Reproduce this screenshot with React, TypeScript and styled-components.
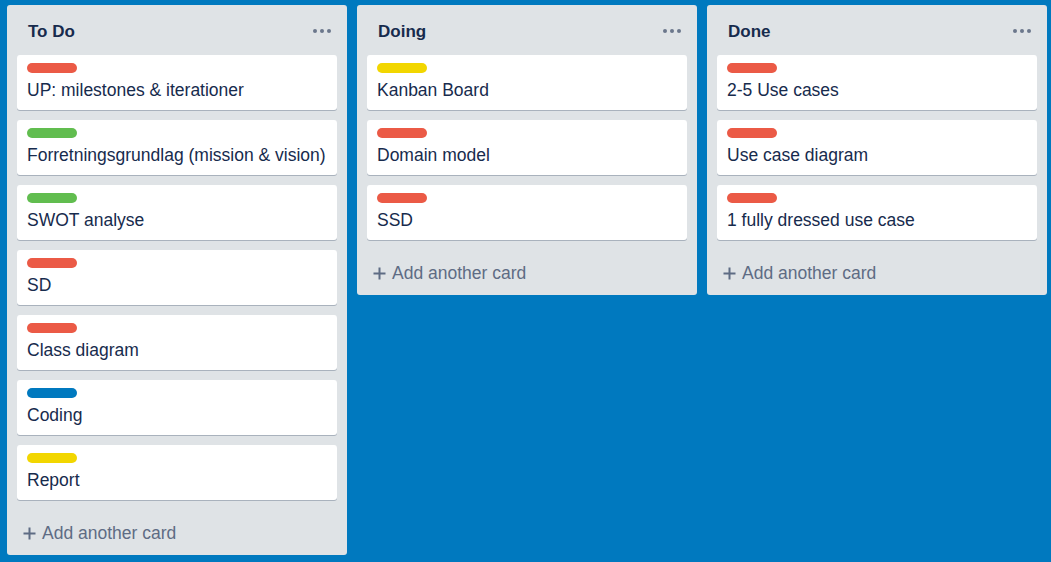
import React from "react";
import styled, { createGlobalStyle } from "styled-components";

const GlobalStyle = createGlobalStyle`
  html, body { margin: 0; padding: 0; }
  body {
    background: #0079bf;
    font-family: "Liberation Sans", Arial, sans-serif;
    width: 1051px;
    height: 562px;
    overflow: hidden;
  }
`;

const Board = styled.div`
  display: flex;
  align-items: flex-start;
  gap: 10px;
  padding: 5px 7px;
`;

const List = styled.section`
  flex: 0 0 340px;
  width: 340px;
  background: #dfe3e6;
  border-radius: 3px;
  display: flex;
  flex-direction: column;
`;

const ListHeader = styled.header`
  display: flex;
  align-items: center;
  justify-content: space-between;
  height: 50px;
  padding: 0 16px 0 21px;
  box-sizing: border-box;
`;

const Title = styled.h2`
  margin: 0;
  font-size: 17px;
  font-weight: 700;
  color: #172b4d;
  padding-top: 3px;
`;

const Dots = styled.div`
  display: flex;
  gap: 3px;
  padding-top: 1px;
  span {
    width: 4px;
    height: 4px;
    border-radius: 50%;
    background: #6b778c;
  }
`;

const Cards = styled.div`
  display: flex;
  flex-direction: column;
  gap: 10px;
  padding: 0 10px;
`;

const Card = styled.div`
  background: #fff;
  border-radius: 3px;
  box-shadow: 0 1px 0 rgba(9, 30, 66, 0.25);
  height: 55px;
  padding: 8px 10px 0;
  box-sizing: border-box;
`;

const Label = styled.div<{ $color: string }>`
  width: 50px;
  height: 10px;
  border-radius: 5px;
  background: ${(p) => p.$color};
`;

const CardText = styled.div`
  margin-top: 7px;
  font-size: 17.5px;
  line-height: 20px;
  color: #172b4d;
  white-space: nowrap;
`;

const AddCard = styled.div`
  display: flex;
  align-items: center;
  gap: 6px;
  height: 55px;
  padding: 11px 16px 0;
  color: #5e6c84;
  font-size: 17.5px;
  box-sizing: border-box;
`;

const colors: Record<string, string> = {
  red: "#eb5a46",
  green: "#61bd4f",
  yellow: "#f2d600",
  blue: "#0079bf",
};

type CardData = { label: keyof typeof colors; text: string };

const lists: { title: string; cards: CardData[] }[] = [
  {
    title: "To Do",
    cards: [
      { label: "red", text: "UP: milestones & iterationer" },
      { label: "green", text: "Forretningsgrundlag (mission & vision)" },
      { label: "green", text: "SWOT analyse" },
      { label: "red", text: "SD" },
      { label: "red", text: "Class diagram" },
      { label: "blue", text: "Coding" },
      { label: "yellow", text: "Report" },
    ],
  },
  {
    title: "Doing",
    cards: [
      { label: "yellow", text: "Kanban Board" },
      { label: "red", text: "Domain model" },
      { label: "red", text: "SSD" },
    ],
  },
  {
    title: "Done",
    cards: [
      { label: "red", text: "2-5 Use cases" },
      { label: "red", text: "Use case diagram" },
      { label: "red", text: "1 fully dressed use case" },
    ],
  },
];

const PlusIcon = () => (
  <svg width="13" height="13" viewBox="0 0 13 13">
    <path d="M6.5 0.5v12M0.5 6.5h12" stroke="#5e6c84" strokeWidth="2" fill="none" />
  </svg>
);

export default function App() {
  return (
    <>
      <GlobalStyle />
      <Board>
        {lists.map((l) => (
          <List key={l.title}>
            <ListHeader>
              <Title>{l.title}</Title>
              <Dots>
                <span />
                <span />
                <span />
              </Dots>
            </ListHeader>
            <Cards>
              {l.cards.map((c) => (
                <Card key={c.text}>
                  <Label $color={colors[c.label]} />
                  <CardText>{c.text}</CardText>
                </Card>
              ))}
            </Cards>
            <AddCard>
              <PlusIcon />
              Add another card
            </AddCard>
          </List>
        ))}
      </Board>
    </>
  );
}
